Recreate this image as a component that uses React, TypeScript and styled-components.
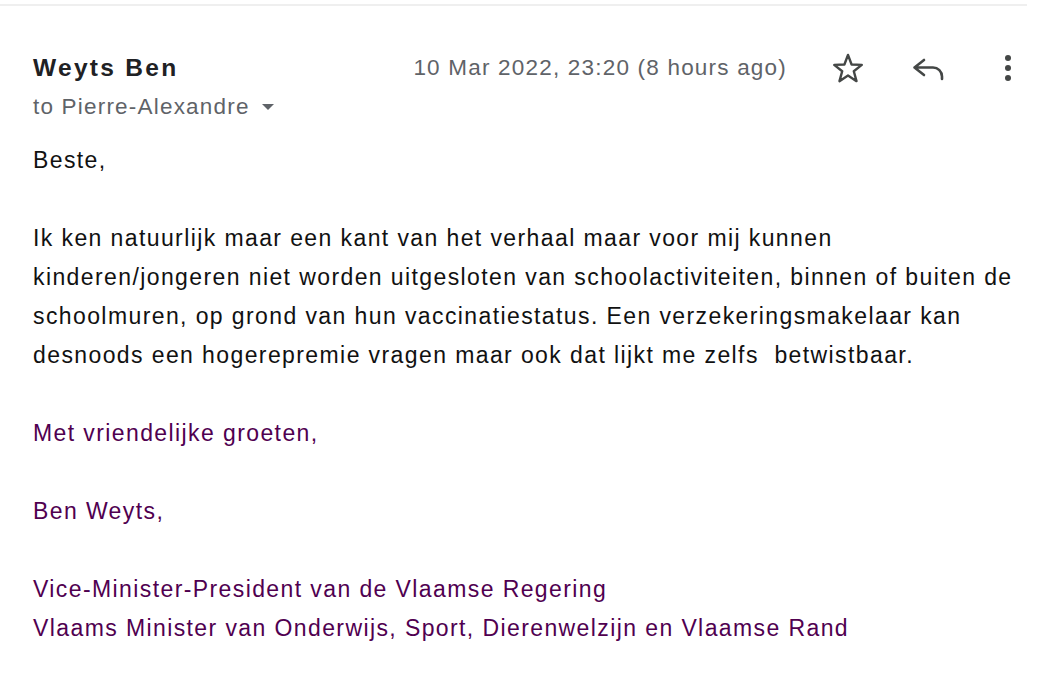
import React from 'react';
import styled, { createGlobalStyle } from 'styled-components';

const GlobalStyle = createGlobalStyle`
  html, body {
    margin: 0;
    padding: 0;
    background: #ffffff;
  }
  body {
    font-family: "Liberation Sans", Arial, Helvetica, sans-serif;
    -webkit-font-smoothing: antialiased;
  }
`;

const Page = styled.div`
  width: 1050px;
  height: 692px;
  overflow: hidden;
  padding-top: 4px;
  box-sizing: border-box;
`;

const TopRule = styled.div`
  width: 1027px;
  height: 2px;
  background: #efefef;
`;

const Message = styled.div`
  padding: 42px 0 0 33px;
  width: 995px;
`;

const Header = styled.div`
  display: flex;
  align-items: center;
  height: 40px;
`;

const Sender = styled.div`
  flex: 1;
  font-size: 24.5px;
  font-weight: 700;
  letter-spacing: 2.3px;
  color: #202124;
  white-space: nowrap;
`;

const Stamp = styled.div`
  font-size: 22.5px;
  letter-spacing: 1.2px;
  color: #5f6368;
  white-space: nowrap;
  margin-right: 41px;
`;

const Actions = styled.div`
  display: flex;
  gap: 40px;
`;

const IconButton = styled.button`
  width: 40px;
  height: 40px;
  padding: 0;
  border: 0;
  background: transparent;
  display: flex;
  align-items: center;
  justify-content: center;
  color: #444746;
  cursor: pointer;
`;

const Recipients = styled.div`
  display: flex;
  align-items: center;
  height: 24px;
  margin-top: 7px;
  font-size: 22.5px;
  letter-spacing: 1.2px;
  color: #5f6368;
  white-space: nowrap;
`;

const Caret = styled.span`
  margin-left: 12px;
  width: 0;
  height: 0;
  border-left: 6.5px solid transparent;
  border-right: 6.5px solid transparent;
  border-top: 6px solid #5f6368;
`;

const Body = styled.div`
  margin-top: 22px;
  font-size: 23px;
  line-height: 39px;
  letter-spacing: 1.4px;
  white-space: pre;
`;

const Paragraph = styled.div<{ $tone?: 'text' | 'signature' }>`
  color: ${p => (p.$tone === 'signature' ? '#500050' : '#111111')};
  margin-bottom: 39px;
  &:last-child {
    margin-bottom: 0;
  }
`;

const StarIcon = () => (
  <svg width="32" height="32" viewBox="0 0 32 32" fill="none">
    <polygon
      points="16,2.9 19.59,12.47 29.79,12.92 21.8,19.29 24.52,29.13 16,23.5 7.48,29.13 10.2,19.29 2.21,12.92 12.41,12.47"
      stroke="currentColor"
      strokeWidth="2.4"
      strokeLinejoin="round"
    />
  </svg>
);

const ReplyIcon = () => (
  <svg width="32" height="32" viewBox="0 0 32 32" fill="none">
    <path
      d="M12 8 L2.5 15.5 L12 23 M2.5 15.5 H21 A9 9 0 0 1 30 24.5 V27"
      stroke="currentColor"
      strokeWidth="2.6"
      strokeLinecap="round"
      strokeLinejoin="round"
    />
  </svg>
);

const MoreIcon = () => (
  <svg width="32" height="32" viewBox="0 0 32 32" fill="currentColor">
    <circle cx="16" cy="6" r="3" />
    <circle cx="16" cy="16" r="3" />
    <circle cx="16" cy="26" r="3" />
  </svg>
);

export default function App() {
  return (
    <Page>
      <GlobalStyle />
      <TopRule />
      <Message>
        <Header>
          <Sender>Weyts Ben</Sender>
          <Stamp>10 Mar 2022, 23:20 (8 hours ago)</Stamp>
          <Actions>
            <IconButton aria-label="Star">
              <StarIcon />
            </IconButton>
            <IconButton aria-label="Reply">
              <ReplyIcon />
            </IconButton>
            <IconButton aria-label="More">
              <MoreIcon />
            </IconButton>
          </Actions>
        </Header>
        <Recipients>
          to Pierre-Alexandre
          <Caret />
        </Recipients>
        <Body>
          <Paragraph>Beste,</Paragraph>
          <Paragraph>
            {'Ik ken natuurlijk maar een kant van het verhaal maar voor mij kunnen\n' +
              'kinderen/jongeren niet worden uitgesloten van schoolactiviteiten, binnen of buiten de\n' +
              'schoolmuren, op grond van hun vaccinatiestatus. Een verzekeringsmakelaar kan\n' +
              'desnoods een hogerepremie vragen maar ook dat lijkt me zelfs  betwistbaar.'}
          </Paragraph>
          <Paragraph $tone="signature">Met vriendelijke groeten,</Paragraph>
          <Paragraph $tone="signature">Ben Weyts,</Paragraph>
          <Paragraph $tone="signature">
            {'Vice-Minister-President van de Vlaamse Regering\n' +
              'Vlaams Minister van Onderwijs, Sport, Dierenwelzijn en Vlaamse Rand'}
          </Paragraph>
        </Body>
      </Message>
    </Page>
  );
}
